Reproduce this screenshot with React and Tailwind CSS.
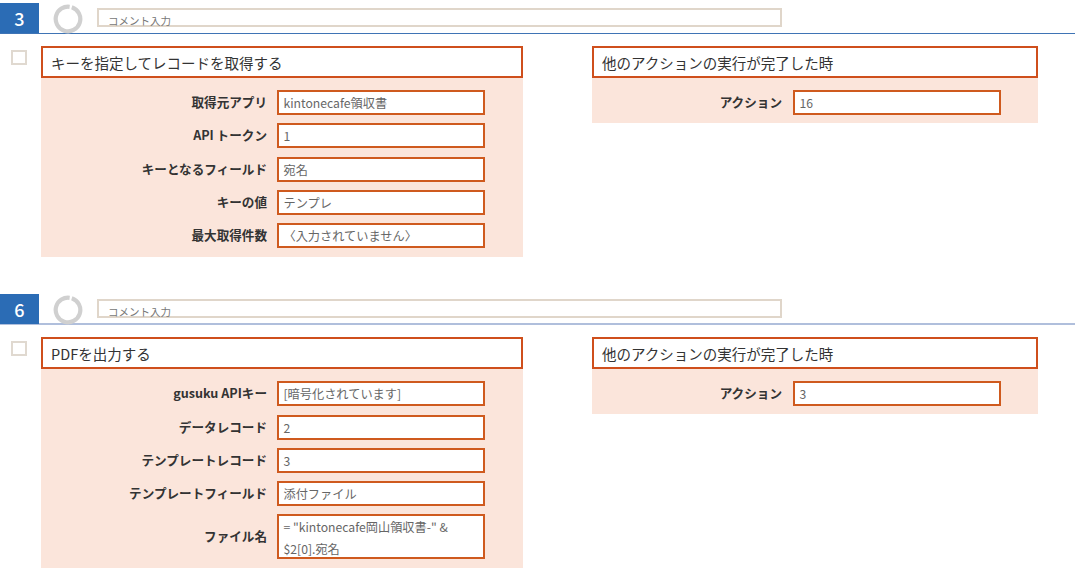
const SECTIONS = [
  {
    no: "3",
    lineColor: "border-b-[1.5px] border-[#3f74b5]",
    title: "キーを指定してレコードを取得する",
    fields: [
      { label: "取得元アプリ", value: "kintonecafe領収書" },
      { label: "API トークン", value: "1" },
      { label: "キーとなるフィールド", value: "宛名" },
      { label: "キーの値", value: "テンプレ" },
      { label: "最大取得件数", value: "〈入力されていません〉" },
    ],
    action: "16",
  },
  {
    no: "6",
    lineColor: "border-b-2 border-[#b0bfdc]",
    title: "PDFを出力する",
    fields: [
      { label: "gusuku APIキー", value: "[暗号化されています]" },
      { label: "データレコード", value: "2" },
      { label: "テンプレートレコード", value: "3" },
      { label: "テンプレートフィールド", value: "添付ファイル" },
      { label: "ファイル名", value: "= \"kintonecafe岡山領収書-\" &\n$2[0].宛名", tall: true },
    ],
    action: "3",
  },
];

function Ring() {
  return (
    <svg width="30" height="30" viewBox="0 0 30 30" className="ml-[14px] mt-[1px] shrink-0">
      <circle cx="15" cy="15" r="12.3" fill="none" stroke="#d0d0d0" strokeWidth="4.2" strokeDasharray="74.5 2.8" transform="rotate(-72 15 15)" />
    </svg>
  );
}

function Field({ label, value, tall, labelWidth }) {
  return (
    <div className="flex items-center gap-[10px]">
      <div className={`${labelWidth} text-right text-[12.6px] font-bold text-[#333] whitespace-nowrap`}>{label}</div>
      <div className={`w-[208px] bg-white border-2 border-[#cf5a1e] pl-[4.5px] text-[12.2px] text-[#666] whitespace-pre-line ${tall ? "h-[45px] leading-[22px]" : "h-[25px] leading-[22px]"}`}>
        {value}
      </div>
    </div>
  );
}

function Title({ children }) {
  return (
    <div className="h-[32px] bg-white border-2 border-[#cf4f1c] pl-[8px] text-[14.5px] leading-[30px] text-[#333]">
      {children}
    </div>
  );
}

function Section({ no, lineColor, title, fields, action }) {
  return (
    <section>
      <div className={`flex h-[31px] ${lineColor}`}>
        <div className="w-[39px] h-[30px] bg-[#2b6cb5] text-white text-[18px] font-medium leading-[30px] text-center">{no}</div>
        <Ring />
        <div className="ml-[14px] mt-[5px] w-[685px] h-[19px] border-2 border-[#e0d6ca] pl-[9px] text-[10.5px] leading-[18px] pt-[2px] text-[#777]">
          コメント入力
        </div>
      </div>
      <div className="flex pt-[12px]">
        <div className="ml-[11px] mt-[4px] w-[16px] h-[15px] border-2 border-[#e0d9d0] bg-white shrink-0" />
        <div className="ml-[14px] w-[482px] shrink-0">
          <Title>{title}</Title>
          <div className="flex flex-col gap-[8.25px] bg-[#fbe5db] pt-[12px] pb-[8.6px]">
            {fields.map((f) => (
              <Field key={f.label} {...f} labelWidth="w-[226px]" />
            ))}
          </div>
        </div>
        <div className="ml-[69px] w-[446px] shrink-0 self-start">
          <Title>他のアクションの実行が完了した時</Title>
          <div className="bg-[#fbe5db] pt-[12px] pb-[8px]">
            <Field label="アクション" value={action} labelWidth="w-[190px] mr-[1px]" />
          </div>
        </div>
      </div>
    </section>
  );
}

export default function App() {
  return (
    <div
      className="w-[1075px] h-[583px] overflow-hidden bg-white pt-[3px] flex flex-col gap-[37.7px]"
      style={{ fontFamily: '"Noto Sans CJK JP", "Noto Sans", sans-serif' }}
    >
      {SECTIONS.map((s) => (
        <Section key={s.no} {...s} />
      ))}
    </div>
  );
}
